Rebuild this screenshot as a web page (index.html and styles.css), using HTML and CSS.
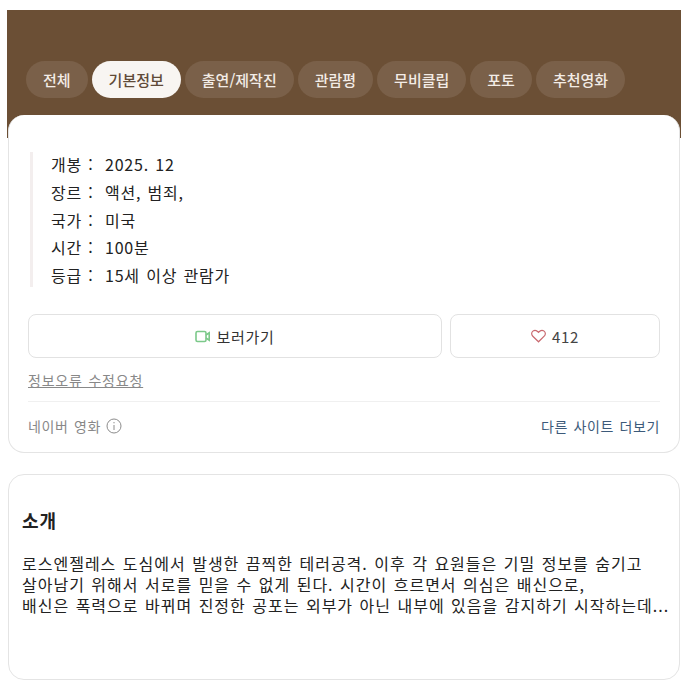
FILE: index.html
```html
<!DOCTYPE html>
<html lang="ko">
<head>
  <meta charset="UTF-8">
  <title>기본정보</title>
  <link rel="stylesheet" href="styles.css">
</head>
<body>
  <div class="header">
    <nav class="tabs">
      <a class="tab">전체</a>
      <a class="tab active">기본정보</a>
      <a class="tab">출연/제작진</a>
      <a class="tab">관람평</a>
      <a class="tab">무비클립</a>
      <a class="tab">포토</a>
      <a class="tab">추천영화</a>
    </nav>
  </div>

  <section class="card info-card">
    <dl class="info-list">
      <div class="info-row"><dt>개봉 :</dt><dd>2025. 12</dd></div>
      <div class="info-row"><dt>장르 :</dt><dd>액션, 범죄,</dd></div>
      <div class="info-row"><dt>국가 :</dt><dd>미국</dd></div>
      <div class="info-row"><dt>시간 :</dt><dd>100분</dd></div>
      <div class="info-row"><dt>등급 :</dt><dd>15세 이상 관람가</dd></div>
    </dl>

    <div class="actions">
      <button class="btn btn-watch">
        <svg width="15" height="13" viewBox="0 0 15 13" fill="none" stroke="#7cc98a" stroke-width="1.600">
          <rect x="1" y="1.500" width="10" height="10" rx="1.500"/>
          <path d="M11 5 14.200 2.800V10.200L11 8"/>
        </svg>
        보러가기
      </button>
      <button class="btn btn-like">
        <svg width="15" height="14" viewBox="0 0 15 14" fill="none" stroke="#c9686e" stroke-width="1.200">
          <path d="M7.500 12.800 1.800 7.200C.2 5.600.4 3.300 1.900 2.100 3.400.9 5.600 1.100 7.500 3.300 9.400 1.100 11.600.9 13.100 2.100 14.600 3.300 14.800 5.600 13.200 7.200Z"/>
        </svg>
        412
      </button>
    </div>

    <a class="report">정보오류 수정요청</a>

    <div class="source">
      <span class="source-name">
        네이버 영화
        <svg width="16" height="16" viewBox="0 0 16 16" fill="none" stroke="#8c8c8c" stroke-width="1">
          <circle cx="8" cy="8" r="7"/>
          <path d="M8 7v5M8 4v1.300"/>
        </svg>
      </span>
      <a class="more">다른 사이트 더보기</a>
    </div>
  </section>

  <section class="card intro-card">
    <h2>소개</h2>
    <p>로스엔젤레스 도심에서 발생한 끔찍한 테러공격. 이후 각 요원들은 기밀 정보를 숨기고<br>살아남기 위해서 서로를 믿을 수 없게 된다. 시간이 흐르면서 의심은 배신으로,<br>배신은 폭력으로 바뀌며 진정한 공포는 외부가 아닌 내부에 있음을 감지하기 시작하는데...</p>
  </section>
</body>
</html>
```

FILE: styles.css
```css
html, body {
  height: 100%;
}
body {
  margin: 0;
  padding: 10px 6px 0 7px;
  box-sizing: border-box;
  background: #fff;
  color: #222;
  font-family: "Noto Sans CJK KR", "Liberation Sans", sans-serif;
  font-size: 16px;
  overflow: hidden;
}
.header {
  background: #6b4f35;
  height: 128px;
  padding: 51px 0 0 19px;
  box-sizing: border-box;
}
.tabs {
  display: flex;
  gap: 4px;
}
.tab {
  height: 37px;
  padding: 0 17px;
  display: flex;
  align-items: center;
  border-radius: 19px;
  background: #7a6049;
  color: #f3ece6;
  font-size: 15px;
  font-weight: 500;
}
.tab.active {
  background: #f8f5f2;
  color: #5f4a38;
}
.card {
  margin: 0 1px;
  background: #fff;
  border: 1px solid #e4e4e4;
  border-radius: 16px;
  box-sizing: border-box;
}
.info-card {
  height: 338px;
  margin-top: -23px;
  padding: 37px 19px 0 19px;
  position: relative;
  border-top: none;
}
.info-list {
  margin: 0 0 0 2px;
  padding: 0 0 0 18px;
  border-left: 3px solid #f3eeee;
  height: 135px;
  display: flex;
  flex-direction: column;
  justify-content: space-between;
  letter-spacing: 0.8px;
  word-spacing: 1px;
}
.info-row {
  display: flex;
  height: 24px;
  align-items: center;
}
.info-row dt {
  width: 54px;
}
.info-row dd {
  margin: 0;
}
.actions {
  display: flex;
  gap: 8px;
  margin-top: 27px;
}
.btn {
  height: 44px;
  background: #fff;
  border: 1px solid #e2e2e2;
  border-radius: 8px;
  display: flex;
  align-items: center;
  justify-content: center;
  gap: 6px;
  font: inherit;
  font-size: 15px;
  letter-spacing: 0.7px;
  color: #333;
}
.btn-watch {
  width: 414px;
}
.btn-like {
  width: 210px;
  color: #444;
}
.report {
  display: block;
  margin-top: 13px;
  font-size: 14px;
  line-height: 18px;
  letter-spacing: 0.8px;
  word-spacing: 1px;
  color: #888;
  text-decoration: underline;
}
.source {
  margin-top: 12px;
  padding-top: 14px;
  border-top: 1px solid #f0f0f0;
  display: flex;
  justify-content: space-between;
  align-items: center;
  font-size: 14px;
  letter-spacing: 0.6px;
  word-spacing: 1px;
}
.source-name {
  display: flex;
  align-items: center;
  gap: 5px;
  color: #888;
}
.more {
  color: #3c5a7a;
}
.intro-card {
  height: 206px;
  margin-top: 21px;
  padding: 32px 13px 0 13px;
}
.intro-card h2 {
  margin: 0 0 20px;
  font-size: 18px;
  line-height: 26px;
  font-weight: 700;
  letter-spacing: 1px;
  color: #222;
}
.intro-card p {
  margin: 0;
  font-size: 16px;
  line-height: 21px;
  letter-spacing: 1px;
  word-spacing: 1px;
  white-space: nowrap;
  color: #222;
}
```
